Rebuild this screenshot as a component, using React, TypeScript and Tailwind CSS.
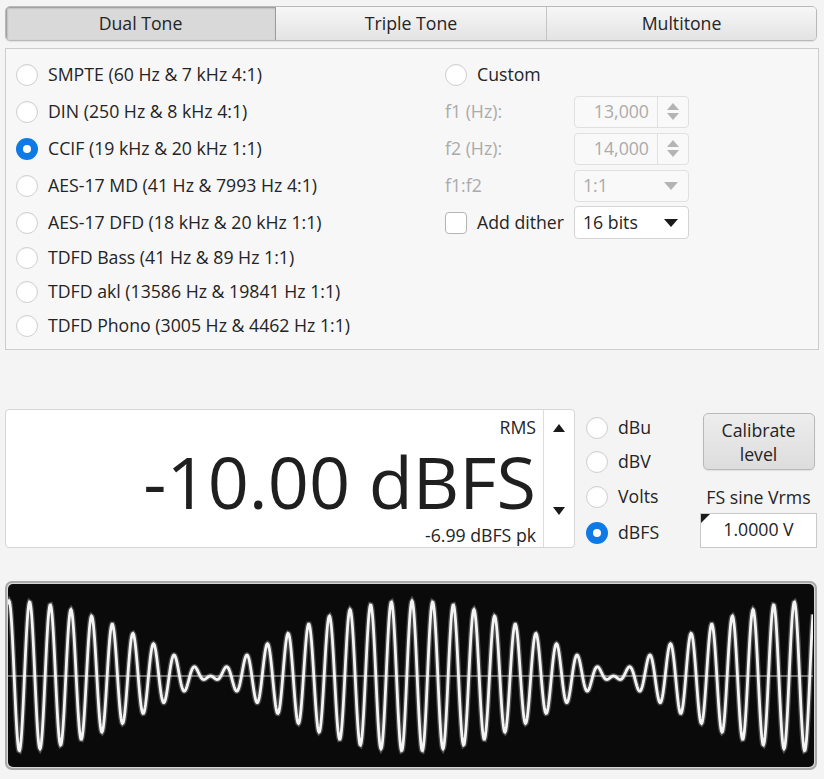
import React from "react";

const FONT = { fontFamily: '"Open Sans", "Noto Sans", sans-serif' };

function Radio({ checked }: { checked?: boolean }) {
  if (checked) {
    return (
      <span className="flex h-[22px] w-[22px] shrink-0 items-center justify-center rounded-full bg-[#0f7ae5]">
        <span className="h-[8px] w-[8px] rounded-full bg-white" />
      </span>
    );
  }
  return (
    <span className="h-[22px] w-[22px] shrink-0 rounded-full border border-[#cfcfcf] bg-white shadow-[inset_0_1px_1px_rgba(0,0,0,0.04)]" />
  );
}

function RadioRow({ label, checked }: { label: string; checked?: boolean }) {
  return (
    <div className="flex items-center gap-[10px]">
      <Radio checked={checked} />
      <span className="text-[#242424]">{label}</span>
    </div>
  );
}

function Spinner({ value }: { value: string }) {
  return (
    <div className="flex h-[32px] w-[115px] items-stretch rounded-[4px] border border-[#e0e0e0] bg-[#f9f9f9]">
      <div className="flex flex-1 items-center justify-end pr-[8px] text-[#ababab]">{value}</div>
      <div className="flex w-[31px] flex-col items-center justify-center gap-[3px] border-l border-[#e0e0e0]">
        <svg width="12" height="7" viewBox="0 0 12 7">
          <path d="M6 0 L12 7 L0 7 Z" fill="#b4b4b4" />
        </svg>
        <svg width="12" height="7" viewBox="0 0 12 7">
          <path d="M0 0 L12 0 L6 7 Z" fill="#b4b4b4" />
        </svg>
      </div>
    </div>
  );
}

function Combo({ value, disabled }: { value: string; disabled?: boolean }) {
  return (
    <div
      className={
        disabled
          ? "flex h-[32px] w-[115px] items-center justify-between rounded-[4px] border border-[#e0e0e0] bg-[#f9f9f9] pl-[8px] pr-[10px] text-[#ababab]"
          : "flex h-[33px] w-[115px] items-center justify-between rounded-[4px] border border-[#d4d4d4] bg-white pl-[8px] pr-[10px] text-[#242424]"
      }
    >
      <span>{value}</span>
      <svg width="14" height="8" viewBox="0 0 14 8">
        <path d="M0 0 L14 0 L7 8 Z" fill={disabled ? "#b4b4b4" : "#1a1a1a"} />
      </svg>
    </div>
  );
}

function Waveform() {
  const W = 805;
  const H = 181;
  const cy = 92;
  const amp = 75;
  const period = 403;
  const x0 = 1;
  let d = "";
  for (let x = 0; x <= W; x += 0.5) {
    const u = (x - x0) / period;
    const s = (Math.cos(2 * Math.PI * 19 * u) + Math.cos(2 * Math.PI * 20 * u)) / 2;
    const y = cy - amp * s;
    d += (x === 0 ? "M" : "L") + x.toFixed(1) + " " + y.toFixed(2) + " ";
  }
  return (
    <svg width={W} height={H} viewBox={`0 0 ${W} ${H}`} className="block">
      <line x1="0" y1={cy} x2={W} y2={cy} stroke="#8a8a8a" strokeWidth="1.5" />
      <path d={d} fill="none" stroke="#ffffff" strokeOpacity="0.25" strokeWidth="5.5" />
      <path d={d} fill="none" stroke="#f4f4f4" strokeWidth="2.8" />
    </svg>
  );
}

export default function App() {
  return (
    <div className="h-[779px] w-[824px] overflow-hidden bg-[#f4f4f4] text-[17.7px] leading-none" style={FONT}>
      {/* Tabs */}
      <div className="ml-[5px] mt-[6px] flex h-[35px] w-[812px] overflow-hidden rounded-[5px] border border-[#b9b9b9] shadow-[0_1px_1px_rgba(0,0,0,0.08)]">
        <div className="flex w-[270px] items-center justify-center border-r border-[#9c9c9c] bg-[#d9d9d9] pt-[1px] text-[#242424] shadow-[inset_1px_1px_2px_rgba(0,0,0,0.35)]">
          Dual Tone
        </div>
        <div className="flex w-[271px] items-center justify-center border-r border-[#c4c4c4] bg-gradient-to-b from-[#f7f7f7] to-[#e3e3e3] pt-[1px] text-[#242424]">
          Triple Tone
        </div>
        <div className="flex flex-1 items-center justify-center bg-gradient-to-b from-[#f7f7f7] to-[#e3e3e3] pt-[1px] text-[#242424]">
          Multitone
        </div>
      </div>

      {/* Preset panel */}
      <div className="ml-[5px] mt-[7px] h-[302px] w-[814px] border border-[#cdcdcd] bg-[#f7f7f7] pl-[10px] pt-[7px]">
        <div className="grid grid-cols-[429px_129px_115px] grid-rows-[37px_37px_37px_37px_37px_34px_34px_34px] items-center">
          <RadioRow label="SMPTE (60 Hz & 7 kHz 4:1)" />
          <div className="col-span-2">
            <RadioRow label="Custom" />
          </div>

          <RadioRow label="DIN (250 Hz & 8 kHz 4:1)" />
          <span className="text-[#ababab]">f1 (Hz):</span>
          <Spinner value="13,000" />

          <RadioRow label="CCIF (19 kHz & 20 kHz 1:1)" checked />
          <span className="text-[#ababab]">f2 (Hz):</span>
          <Spinner value="14,000" />

          <RadioRow label="AES-17 MD (41 Hz & 7993 Hz 4:1)" />
          <span className="text-[#ababab]">f1:f2</span>
          <Combo value="1:1" disabled />

          <RadioRow label="AES-17 DFD (18 kHz & 20 kHz 1:1)" />
          <div className="flex items-center gap-[10px]">
            <span className="h-[22px] w-[22px] rounded-[4px] border border-[#b5b5b5] bg-white" />
            <span className="text-[#242424]">Add dither</span>
          </div>
          <Combo value="16 bits" />

          <div className="col-span-3">
            <RadioRow label="TDFD Bass (41 Hz & 89 Hz 1:1)" />
          </div>
          <div className="col-span-3">
            <RadioRow label="TDFD akl (13586 Hz & 19841 Hz 1:1)" />
          </div>
          <div className="col-span-3">
            <RadioRow label="TDFD Phono (3005 Hz & 4462 Hz 1:1)" />
          </div>
        </div>
      </div>

      {/* Level row */}
      <div className="ml-[5px] mt-[59px] flex h-[139px] items-start">
        <div className="flex h-[139px] w-[570px] rounded-[4px] border border-[#d6d6d6] bg-white">
          <div className="flex flex-1 flex-col items-end pr-[7px] pt-[9px] text-[#242424]">
            <span>RMS</span>
            <span className="mt-[16px] text-[72px] leading-[56px] text-[#1f1f1f]">-10.00 dBFS</span>
            <span className="mt-[18px]">-6.99 dBFS pk</span>
          </div>
          <div className="flex w-[31px] flex-col items-center justify-between border-l border-[#dcdcdc] pb-[32px] pt-[14px]">
            <svg width="12" height="8" viewBox="0 0 12 8">
              <path d="M6 0 L12 8 L0 8 Z" fill="#1a1a1a" />
            </svg>
            <svg width="12" height="8" viewBox="0 0 12 8">
              <path d="M0 0 L12 0 L6 8 Z" fill="#1a1a1a" />
            </svg>
          </div>
        </div>

        <div className="ml-[11px] mt-[2px] grid grid-rows-[34px_34px_36px_36px] items-center">
          <RadioRow label="dBu" />
          <RadioRow label="dBV" />
          <RadioRow label="Volts" />
          <RadioRow label="dBFS" checked />
        </div>

        <div className="ml-[auto] mr-[7px] flex w-[117px] flex-col items-center">
          <div className="mt-[4px] flex h-[57px] w-[112px] flex-col items-center justify-center rounded-[5px] border border-[#b9b9b9] bg-gradient-to-b from-[#ededed] to-[#dddddd] leading-[24px] text-[#242424] shadow-[0_1px_1px_rgba(0,0,0,0.08)]">
            <span>Calibrate</span>
            <span>level</span>
          </div>
          <span className="mt-[19px] text-[#242424]">FS sine Vrms</span>
          <div className="relative mt-[6px] flex h-[35px] w-[117px] items-center justify-center border border-[#c9c9c9] bg-white text-[#242424]">
            <span className="absolute left-0 top-0 h-0 w-0 border-r-[9px] border-t-[9px] border-r-transparent border-t-[#1a1a1a]" />
            1.0000 V
          </div>
        </div>
      </div>

      {/* Waveform */}
      <div className="ml-[5px] mt-[33px] h-[189px] w-[812px] rounded-[7px] border-[2px] border-[#a9a9a9] bg-[#d8d8d8] p-[1px]">
        <div className="h-full w-full overflow-hidden rounded-[5px] bg-[#0a0a0a]">
          <Waveform />
        </div>
      </div>
    </div>
  );
}
